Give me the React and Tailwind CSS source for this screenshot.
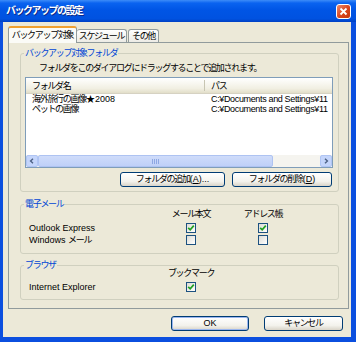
import React from "react";

const J = ({ children, className = "" }) => (
  <span className={`tracking-[-1.3px] ${className}`}>{children}</span>
);

const Check = ({ on }) => (
  <span className="w-[10px] h-[10px] border border-[#1c5180] bg-[linear-gradient(135deg,#dcdcd5,#ffffff)] flex items-center justify-center">
    {on && (
      <svg width="8" height="8" viewBox="0 0 8 8">
        <path d="M1.2 3.8 L3.2 5.8 L6.8 1.6" stroke="#21a121" strokeWidth="1.7" fill="none" />
      </svg>
    )}
  </span>
);

const XpButton = ({ children, className = "" }) => (
  <div
    className={`h-[15px] border border-[#003c74] rounded-[3px] bg-[linear-gradient(to_bottom,#ffffff,#f3f2ec_65%,#d9d4c8)] flex items-center justify-center leading-[13px] ${className}`}
  >
    {children}
  </div>
);

const Arrow = ({ dir }) => (
  <svg width="6" height="6" viewBox="0 0 6 6">
    <path
      d={dir === "left" ? "M4 0.8 L1.6 3 L4 5.2" : "M2 0.8 L4.4 3 L2 5.2"}
      stroke="#4d6185"
      strokeWidth="1.4"
      fill="none"
    />
  </svg>
);

const ROWS = [
  { name: "Outlook Express", body: true, addr: true },
  { name: "Windows メール", body: false, addr: false },
];

export default function App() {
  return (
    <div className="w-[356px] h-[342px] bg-[#0b4fdf] flex flex-col overflow-hidden font-['Liberation_Sans','Noto_Sans_CJK_JP',sans-serif] text-[9px] leading-[10px] text-black">
      {/* title bar */}
      <div className="h-[22px] shrink-0 flex items-center pl-[6px] pr-[5px] bg-[linear-gradient(to_bottom,#3d8cf8_0%,#0a63f0_14%,#0055e5_45%,#0052e0_85%,#0040c4_100%)]">
        <span className="flex-1 text-white font-bold text-[10px] tracking-[-1.5px] [text-shadow:1px_1px_0_#0b2a8a]">
          バックアップの設定
        </span>
        <div className="w-[15px] h-[15px] border border-white rounded-[3px] bg-[linear-gradient(135deg,#ee8a6c,#d9441b_55%,#c3370f)] flex items-center justify-center">
          <svg width="9" height="9" viewBox="0 0 9 9">
            <path d="M1.5 1.5 L7.5 7.5 M7.5 1.5 L1.5 7.5" stroke="#ffffff" strokeWidth="1.8" />
          </svg>
        </div>
      </div>

      {/* body */}
      <div className="flex-1 ml-[3px] mr-[5px] mb-[5px] bg-[#ece9d8] flex flex-col pt-[4px]">
        {/* tabs */}
        <div className="h-[17px] flex items-end pl-[5px] relative z-10 -mb-px">
          <div className="w-[69px] h-[17px] border border-[#919b9c] border-b-0 border-t-2 border-t-[#f0a030] rounded-t-[3px] bg-[#fbfbf7] flex items-center justify-center pb-[1px]">
            <J>バックアップ対象</J>
          </div>
          <div className="w-[50px] h-[13px] mb-[1px] border border-[#919b9c] border-b-0 border-l-0 rounded-t-[3px] bg-[linear-gradient(to_bottom,#ffffff,#ecebe5)] flex items-center justify-center">
            <J>スケジュール</J>
          </div>
          <div className="w-[31px] h-[13px] mb-[1px] ml-[1px] border border-[#919b9c] border-b-0 rounded-t-[3px] bg-[linear-gradient(to_bottom,#ffffff,#ecebe5)] flex items-center justify-center">
            <J>その他</J>
          </div>
        </div>

        {/* tab panel */}
        <div className="ml-[5px] mr-[2px] h-[267px] border border-[#919b9c] bg-[#ece9d8] flex flex-col pl-[11px] pr-[9px] pt-[5px]">
          {/* backup folders */}
          <fieldset className="border border-[#d0d0bf] rounded-[3px] pb-[4px]">
            <legend className="ml-[3px] px-[1px] leading-[10px] text-[#0046d5]">
              <J>バックアップ対象フォルダ</J>
            </legend>
            <div className="mt-[5px] ml-[18px] h-[10px] whitespace-nowrap">
              <J>フォルダをこのダイアログにドラッグすることで追加されます。</J>
            </div>
            <div className="mt-[4px] ml-[4px] w-[308px] h-[91px] border border-[#7f9db9] bg-white flex flex-col">
              <div className="h-[16px] shrink-0 flex items-center bg-[linear-gradient(to_bottom,#ffffff,#f1efe2_70%,#e2dec9)] border-b border-[#d6d2c2]">
                <div className="w-[178px] pl-[6px]">
                  <J>フォルダ名</J>
                </div>
                <span className="w-px h-[11px] bg-[#c7c5b2]" />
                <div className="pl-[6px]">
                  <J>パス</J>
                </div>
              </div>
              <div className="flex-1">
                {[
                  ["海外旅行の画像", "★2008"],
                  ["ペットの画像", ""],
                ].map(([jp, rest]) => (
                  <div key={jp} className="h-[10px] flex items-center whitespace-nowrap">
                    <div className="w-[179px] pl-[6px]">
                      <J>{jp}</J>
                      {rest}
                    </div>
                    <div className="pl-[6px] flex-1 overflow-hidden tracking-[-0.35px]">C:¥Documents and Settings¥11</div>
                  </div>
                ))}
              </div>
              {/* horizontal scrollbar */}
              <div className="h-[12px] shrink-0 flex bg-[#f5f4ef]">
                <div className="w-[12px] bg-[#c4d5fb] border border-[#b0c5f4] rounded-[2px] flex items-center justify-center">
                  <Arrow dir="left" />
                </div>
                <div className="w-[235px] bg-[linear-gradient(to_bottom,#cfdcfa,#bfd0f8)] border border-[#aec3f2] rounded-[2px] flex items-center justify-center gap-[1px]">
                  <span className="w-px h-[5px] bg-[#8ea7e3]" />
                  <span className="w-px h-[5px] bg-[#8ea7e3]" />
                  <span className="w-px h-[5px] bg-[#8ea7e3]" />
                  <span className="w-px h-[5px] bg-[#8ea7e3]" />
                </div>
                <div className="flex-1" />
                <div className="w-[12px] bg-[#c4d5fb] border border-[#b0c5f4] rounded-[2px] flex items-center justify-center">
                  <Arrow dir="right" />
                </div>
              </div>
            </div>
            <div className="mt-[4px] flex justify-end gap-[7px] pr-[6px]">
              <XpButton className="w-[105px]">
                <J>フォルダの追加</J>(<span className="underline">A</span>)...
              </XpButton>
              <XpButton className="w-[100px]">
                <J>フォルダの削除</J>(<span className="underline">D</span>)
              </XpButton>
            </div>
          </fieldset>

          {/* e-mail */}
          <fieldset className="mt-[7px] border border-[#d0d0bf] rounded-[3px] pb-[8px]">
            <legend className="ml-[3px] px-[1px] leading-[10px] text-[#0046d5]">
              <J>電子メール</J>
            </legend>
            <div className="grid grid-cols-[126px_72px_72px] pl-[8px] items-center">
              <div className="h-[10px]" />
              <div className="h-[10px] text-center">
                <J>メール本文</J>
              </div>
              <div className="h-[10px] text-center">
                <J>アドレス帳</J>
              </div>
              {ROWS.map((r, i) => (
                <React.Fragment key={r.name}>
                  <div className={`h-[10px] whitespace-nowrap ${i === 0 ? "mt-[4px]" : "mt-[2px]"}`}>
                    {r.name.startsWith("Windows") ? (
                      <>
                        Windows <J>メール</J>
                      </>
                    ) : (
                      r.name
                    )}
                  </div>
                  <div className={`flex justify-center ${i === 0 ? "mt-[4px]" : "mt-[2px]"}`}>
                    <Check on={r.body} />
                  </div>
                  <div className={`flex justify-center ${i === 0 ? "mt-[4px]" : "mt-[2px]"}`}>
                    <Check on={r.addr} />
                  </div>
                </React.Fragment>
              ))}
            </div>
          </fieldset>

          {/* browser */}
          <fieldset className="mt-[6px] border border-[#d0d0bf] rounded-[3px] pb-[7px]">
            <legend className="ml-[3px] px-[1px] leading-[10px] text-[#0046d5]">
              <J>ブラウザ</J>
            </legend>
            <div className="grid grid-cols-[126px_72px_72px] pl-[8px] items-center -mt-[2px]">
              <div className="h-[10px]" />
              <div className="h-[10px] text-center">
                <J>ブックマーク</J>
              </div>
              <div className="h-[10px]" />
              <div className="h-[10px] mt-[4px] whitespace-nowrap">Internet Explorer</div>
              <div className="flex justify-center mt-[4px]">
                <Check on />
              </div>
              <div className="mt-[4px]" />
            </div>
          </fieldset>
        </div>

        {/* dialog buttons */}
        <div className="mt-[7px] flex justify-end gap-[15px] pr-[8px]">
          <XpButton className="w-[78px] shadow-[inset_0_0_0_1px_#9bb6ef]">OK</XpButton>
          <XpButton className="w-[79px]">
            <J>キャンセル</J>
          </XpButton>
        </div>
      </div>
    </div>
  );
}
